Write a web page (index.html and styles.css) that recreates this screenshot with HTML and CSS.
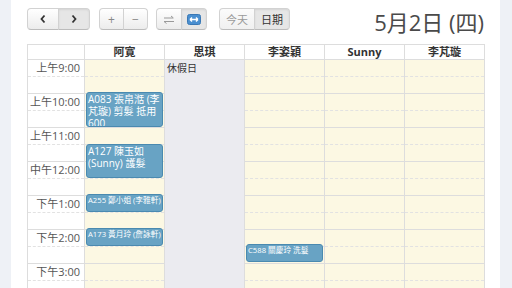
FILE: index.html
```html
<!DOCTYPE html>
<html>
<head>
<meta charset="utf-8">
<link rel="stylesheet" href="styles.css">
</head>
<body>
<div class="panel">
  <div class="topbar">
    <div class="tools">
      <div class="btn-group g-nav">
        <button class="btn"><svg width="8" height="10" viewBox="0 0 8 10"><polyline points="5.5,1.5 2.5,5 5.5,8.5" fill="none" stroke="#333" stroke-width="1.8"/></svg></button>
        <button class="btn active"><svg width="8" height="10" viewBox="0 0 8 10"><polyline points="2.5,1.5 5.5,5 2.5,8.5" fill="none" stroke="#333" stroke-width="1.8"/></svg></button>
      </div>
      <div class="btn-group g-zoom">
        <button class="btn light">+</button>
        <button class="btn light">−</button>
      </div>
      <div class="btn-group g-mode">
        <button class="btn"><svg width="12" height="9" viewBox="0 0 12 9"><path d="M1 3 H10 M8 1 L10.5 3 M1 6.5 H11 M1 6.5 L3.5 8.5" fill="none" stroke="#999" stroke-width="1"/></svg></button>
        <button class="btn active"><svg width="14" height="11" viewBox="0 0 14 11"><rect x="0.5" y="0.5" width="13" height="10" rx="2" fill="#4a8fd0" stroke="#3a78b5"/><path d="M3 5.5 H11 M3 5.5 L5 3.5 M3 5.5 L5 7.5 M11 5.5 L9 3.5 M11 5.5 L9 7.5" fill="none" stroke="#fff" stroke-width="1.4"/></svg></button>
      </div>
      <div class="btn-group g-day">
        <button class="btn muted">今天</button>
        <button class="btn active">日期</button>
      </div>
    </div>
    <h2 class="title">5月2日 (四)</h2>
  </div>

  <div class="cal">
    <div class="cal-head">
      <div class="hc"></div>
      <div class="hc">阿寛</div>
      <div class="hc">思琪</div>
      <div class="hc">李姿穎</div>
      <div class="hc">Sunny</div>
      <div class="hc">李芃璇</div>
    </div>
    <div class="cal-body">
      <div class="col times">
        <div class="slot"><span class="tl">上午9:00</span></div><div class="slot"></div>
        <div class="slot"><span class="tl">上午10:00</span></div><div class="slot"></div>
        <div class="slot"><span class="tl">上午11:00</span></div><div class="slot"></div>
        <div class="slot"><span class="tl">中午12:00</span></div><div class="slot"></div>
        <div class="slot"><span class="tl">下午1:00</span></div><div class="slot"></div>
        <div class="slot"><span class="tl">下午2:00</span></div><div class="slot"></div>
        <div class="slot"><span class="tl">下午3:00</span></div><div class="slot"></div>
        <div class="slot"><span class="tl">下午4:00</span></div><div class="slot"></div>
      </div>
      <div class="col open">
        <div class="slot"></div><div class="slot"></div><div class="slot"></div><div class="slot"></div>
        <div class="slot"></div><div class="slot"></div><div class="slot"></div><div class="slot"></div>
        <div class="slot"></div><div class="slot"></div><div class="slot"></div><div class="slot"></div>
        <div class="slot"></div><div class="slot"></div><div class="slot"></div><div class="slot"></div>
        <div class="ev" style="top:32px;height:35px">A083 張帛湉 (李芃璇) 剪髮 抵用600</div>
        <div class="ev" style="top:84px;height:34px">A127 陳玉如 (Sunny) 護髮</div>
        <div class="ev small" style="top:134px;height:18px">A255 鄭小姐 (李雅軒)</div>
        <div class="ev small" style="top:168px;height:18px">A173 黃月玲 (詹詠軒)</div>
      </div>
      <div class="col off">
        <div class="off-label">休假日</div>
      </div>
      <div class="col open">
        <div class="slot"></div><div class="slot"></div><div class="slot"></div><div class="slot"></div>
        <div class="slot"></div><div class="slot"></div><div class="slot"></div><div class="slot"></div>
        <div class="slot"></div><div class="slot"></div><div class="slot"></div><div class="slot"></div>
        <div class="slot"></div><div class="slot"></div><div class="slot"></div><div class="slot"></div>
        <div class="ev small" style="top:184px;height:18px">C588 關慶玲 洗髮</div>
      </div>
      <div class="col open">
        <div class="slot"></div><div class="slot"></div><div class="slot"></div><div class="slot"></div>
        <div class="slot"></div><div class="slot"></div><div class="slot"></div><div class="slot"></div>
        <div class="slot"></div><div class="slot"></div><div class="slot"></div><div class="slot"></div>
        <div class="slot"></div><div class="slot"></div><div class="slot"></div><div class="slot"></div>
      </div>
      <div class="col open">
        <div class="slot"></div><div class="slot"></div><div class="slot"></div><div class="slot"></div>
        <div class="slot"></div><div class="slot"></div><div class="slot"></div><div class="slot"></div>
        <div class="slot"></div><div class="slot"></div><div class="slot"></div><div class="slot"></div>
        <div class="slot"></div><div class="slot"></div><div class="slot"></div><div class="slot"></div>
      </div>
    </div>
  </div>
</div>
</body>
</html>
```

FILE: styles.css
```css
* { box-sizing: border-box; }
html, body {
  margin: 0;
  height: 288px;
  overflow: hidden;
  background: #eef1f6;
  font-family: "Open Sans", "Noto Sans CJK TC", sans-serif;
  color: #333;
}
.panel {
  margin: 0 12px 0 11px;
  height: 288px;
  background: #fff;
  padding: 8px 15px 0 16px;
  overflow: hidden;
}
.topbar {
  display: flex;
  justify-content: space-between;
  align-items: flex-start;
  height: 36px;
}
.tools {
  display: flex;
  align-items: center;
}
.btn-group {
  display: flex;
}
.g-zoom { margin-left: 9px; }
.g-mode { margin-left: 8px; }
.g-day { margin-left: 12px; }
.btn {
  height: 22px;
  padding: 0;
  margin: 0;
  display: flex;
  align-items: center;
  justify-content: center;
  font-family: "Open Sans", "Noto Sans CJK TC", sans-serif;
  font-size: 11px;
  color: #333;
  background: linear-gradient(#ffffff, #ececec);
  border: 1px solid #d2d2d2;
  border-bottom-color: #bcbcbc;
  border-radius: 0;
}
.btn + .btn { margin-left: -1px; }
.btn:first-child { border-radius: 4px 0 0 4px; }
.btn:last-child { border-radius: 0 4px 4px 0; }
.btn.active {
  background: #e6e6e6;
  box-shadow: inset 0 1px 2px rgba(0,0,0,0.08);
}
.btn.light { color: #888; font-size: 12px; }
.btn.muted { color: #9a9a9a; background: linear-gradient(#fbfbfb, #f0f0f0); }
.g-nav .btn { width: 32px; }
.g-zoom .btn { width: 25px; }
.g-mode .btn { width: 26px; }
.g-day .btn { width: 36px; }
.title {
  margin: 0;
  font-size: 22px;
  line-height: 28px;
  font-weight: 400;
  color: #4a4a4a;
  padding-right: 1px;
}
.cal {
  width: 458px;
  border: 1px solid #dddddd;
  border-bottom: none;
}
.cal-head, .cal-body {
  display: grid;
  grid-template-columns: 56px repeat(5, 1fr);
}
.cal-head {
  height: 15px;
  border-bottom: 1px solid #dddddd;
}
.hc {
  font-size: 11px;
  font-weight: 700;
  line-height: 14px;
  text-align: center;
  color: #333;
}
.hc + .hc { border-left: 1px solid #dddddd; }
.col {
  position: relative;
  height: 272px;
}
.col + .col { border-left: 1px solid #dddddd; }
.open { background: #fcf8e3; }
.off { background: #ebebf0; }
.slot {
  height: 17px;
  border-bottom: 1px dashed #e2e2e2;
}
.slot:nth-child(even) { border-bottom: 1px solid #dddddd; }
.tl {
  display: block;
  text-align: right;
  padding-right: 4px;
  font-size: 11px;
  line-height: 16px;
  color: #555;
}
.off-label {
  font-size: 10px;
  line-height: 16px;
  padding-left: 2px;
  color: #333;
}
.ev {
  position: absolute;
  left: 1px;
  right: 1px;
  background: #68a3c4;
  border: 1px solid #4a8ab0;
  border-radius: 3px;
  color: #fff;
  font-size: 10px;
  line-height: 12px;
  padding: 0 1px;
  overflow: hidden;
}
.ev.small {
  font-size: 7.7px;
  line-height: 11px;
  white-space: nowrap;
}
```
